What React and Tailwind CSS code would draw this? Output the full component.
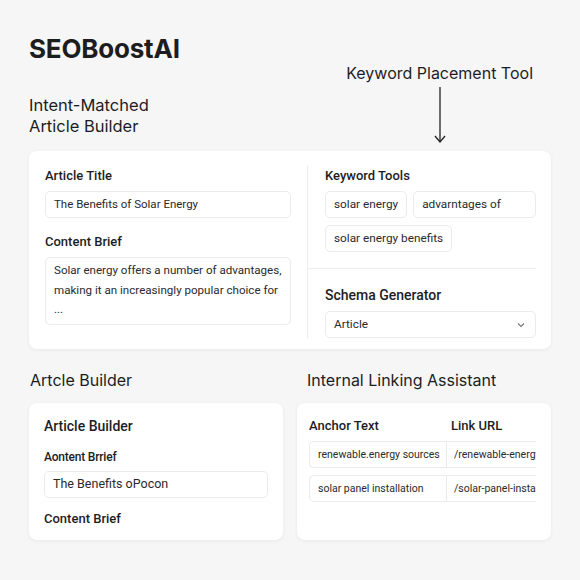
import React from 'react';

const roboto = { fontFamily: 'Roboto, "Liberation Sans", sans-serif' };

const Label = ({ children, className = '' }) => (
  <div className={`text-[13px] leading-[20px] font-medium text-[#1d1d1f] ${className}`}>{children}</div>
);

const Chip = ({ children, grow }) => (
  <div
    className={`h-[27px] flex items-center px-[8px] rounded-[5px] border border-[#ebebed] bg-white text-[11.8px] text-[#2a2a2d] ${grow ? 'flex-1' : ''}`}
  >
    {children}
  </div>
);

const App = () => {
  return (
    <div
      className="w-[580px] h-[580px] overflow-hidden bg-[#f6f6f7] px-[29px] pt-[35px] text-[#1d1d1f]"
      style={{ fontFamily: 'Inter, "Noto Sans", sans-serif' }}
    >
      <h1 className="text-[26px] leading-[28px] font-bold tracking-[-0.2px]">SEOBoostAI</h1>

      <div className="flex justify-between">
        <div className="mt-[32px] text-[16.5px] leading-[20.5px] text-[#1d1d1f]">
          <div>Intent-Matched</div>
          <div>Article Builder</div>
        </div>
        <div className="flex flex-col items-center mr-[18px]">
          <div className="text-[16px] leading-[20px]">Keyword Placement Tool</div>
          <svg width="14" height="56" viewBox="0 0 14 56" className="mt-[4px]" fill="none">
            <path d="M7 0 V55" stroke="#222" strokeWidth="1.3" />
            <path d="M2 49 L7 55 L12 49" stroke="#222" strokeWidth="1.3" />
          </svg>
        </div>
      </div>

      {/* top card */}
      <div
        className="mt-[8px] w-[522px] bg-white rounded-[8px] shadow-[0_1px_4px_rgba(0,0,0,0.06)] flex pt-[15px] pb-[11px]"
        style={roboto}
      >
        <div className="w-[278px] pl-[16px] pr-[16px]">
          <Label>Article Title</Label>
          <div className="mt-[5px] h-[27px] flex items-center px-[8px] rounded-[5px] border border-[#ebebed] text-[11.5px] text-[#2a2a2d]">
            The Benefits of Solar Energy
          </div>
          <Label className="mt-[14px]">Content Brief</Label>
          <div className="mt-[5px] h-[68px] px-[8px] pt-[3px] rounded-[5px] border border-[#ebebed] text-[11.6px] leading-[19.5px] text-[#2a2a2d]">
            Solar energy offers a number of advantages, making it an increasingly popular choice for
            <div>...</div>
          </div>
        </div>
        <div className="w-px bg-[#ececee] self-stretch" />
        <div className="flex-1 mr-[15px]">
          <div className="pl-[17px]">
            <Label>Keyword Tools</Label>
            <div className="mt-[5px] flex gap-[6px]">
              <Chip>solar energy</Chip>
              <Chip grow>advarntages of</Chip>
            </div>
            <div className="mt-[7px] flex">
              <Chip>solar energy benefits</Chip>
            </div>
          </div>
          <div className="mt-[16px] h-px bg-[#ececee]" />
          <div className="pl-[17px]">
            <div className="mt-[16px] text-[14px] leading-[20px] font-medium">Schema Generator</div>
            <div className="mt-[6px] h-[27px] flex items-center justify-between px-[8px] rounded-[5px] border border-[#ebebed] text-[11.8px] text-[#2a2a2d]">
              <span>Article</span>
              <svg width="8" height="6" viewBox="0 0 8 6" fill="none" className="mr-[2px]">
                <path d="M1 1.5 L4 4.5 L7 1.5" stroke="#777" strokeWidth="1.2" />
              </svg>
            </div>
          </div>
        </div>
      </div>

      {/* bottom */}
      <div className="mt-[21px] flex gap-[14px]">
        <div className="w-[254px]">
          <div className="pl-[1px] text-[16px] leading-[21px]">Artcle Builder</div>
          <div
            className="mt-[12px] h-[137px] bg-white rounded-[8px] shadow-[0_1px_4px_rgba(0,0,0,0.06)] px-[15px] pt-[13px]"
            style={roboto}
          >
            <div className="text-[14px] leading-[20px] font-medium">Article Builder</div>
            <div className="mt-[12px] text-[12px] leading-[18px] font-medium tracking-[-0.2px]">Aontent Brrief</div>
            <div className="mt-[5px] h-[27px] flex items-center px-[8px] rounded-[5px] border border-[#ebebed] text-[12.5px] text-[#2a2a2d]">
              The Benefits oPocon
            </div>
            <div className="mt-[11px] text-[13px] leading-[20px] font-medium">Content Brief</div>
          </div>
        </div>
        <div className="w-[254px]">
          <div className="pl-[10px] text-[16px] leading-[21px]">Internal Linking Assistant</div>
          <div
            className="mt-[12px] h-[137px] bg-white rounded-[8px] shadow-[0_1px_4px_rgba(0,0,0,0.06)] pl-[12px] pr-[15px] pt-[13px]"
            style={roboto}
          >
            <div className="flex text-[13px] leading-[20px] font-medium">
              <div className="w-[142px]">Anchor Text</div>
              <div>Link URL</div>
            </div>
            <div className="mt-[5px] overflow-hidden">
              {[
                ['renewable.energy sources', '/renewable-energy-sources'],
                ['solar panel installation', '/solar-panel-installation'],
              ].map(([a, b], i) => (
                <div
                  key={a}
                  className={`flex h-[27px] items-center rounded-l-[5px] border border-r-0 border-[#ebebed] text-[10.5px] text-[#2a2a2d] whitespace-nowrap ${i ? 'mt-[7px]' : ''}`}
                >
                  <div className="w-[137px] shrink-0 pl-[8px] h-full flex items-center border-r border-[#ebebed]">{a}</div>
                  <div className="pl-[7px]">{b}</div>
                </div>
              ))}
            </div>
          </div>
        </div>
      </div>
    </div>
  );
};

export default App;
